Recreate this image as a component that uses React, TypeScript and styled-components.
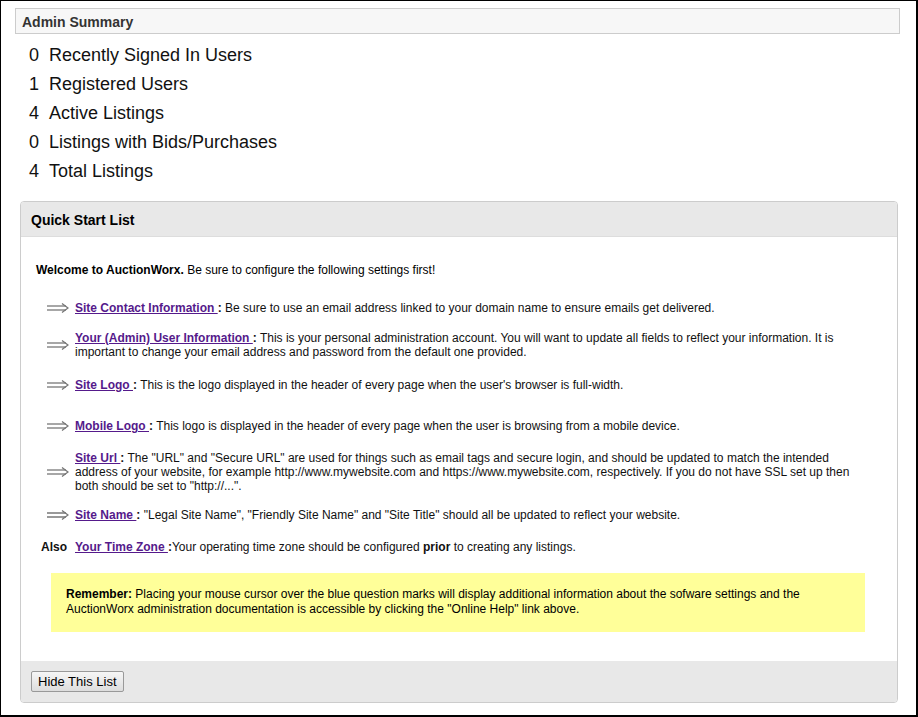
import React from "react";
import styled, { createGlobalStyle } from "styled-components";

const Global = createGlobalStyle`
  body { margin: 0; font-family: "Liberation Sans", Arial, sans-serif; color: #000; background: #fff; }
`;

const Frame = styled.div`
  width: 918px; height: 717px; box-sizing: border-box;
  border: 1px solid #000; border-right-width: 2px; border-bottom-width: 2px;
  padding: 7px 16px 0 14px;
`;
const SummaryBar = styled.div`
  height: 26px; box-sizing: border-box; border: 1px solid #ccc; background: #f7f7f7;
  font-size: 14px; font-weight: bold; color: #333; padding: 5px 0 0 6px;
`;
const Stats = styled.div`
  display: flex; flex-direction: column; padding: 9px 0 0 14px;
`;
const Stat = styled.div`
  display: flex; gap: 10px; font-size: 18px; height: 29px; line-height: 24px; color: #111;
`;
const Panel = styled.div`
  margin: 13px 0 0 5px; width: 876px; border: 1px solid #ccc; border-radius: 4px; overflow: hidden;
`;
const PanelHeader = styled.div`
  height: 35px; box-sizing: border-box; background: #e8e8e8; border-bottom: 1px solid #ddd;
  font-size: 14px; font-weight: bold; padding: 10px 0 0 10px;
`;
const PanelBody = styled.div`
  background: #fff; padding: 26px 30px 29px 15px; font-size: 12px; line-height: 14px;
`;
const Welcome = styled.p`
  margin: 0 0 13px 0; color: #000;
`;
const Row = styled.div<{ $h: number }>`
  display: grid; grid-template-columns: 39px 1fr; align-items: center; height: ${p => p.$h}px; color: #111;
`;
const ArrowCell = styled.div`
  display: flex; justify-content: center; padding-left: 4px;
`;
const AlsoCell = styled.div`
  font-weight: bold; font-size: 12px; padding-left: 5px;
`;
const Link = styled.a`
  color: #551a8b; font-weight: bold; text-decoration: underline;
`;
const Note = styled.div`
  margin: 12px 0 0 15px; width: 814px; box-sizing: border-box; background: #ffff99;
  padding: 14px 15px 15px; line-height: 15px;
`;
const Footer = styled.div`
  background: #e8e8e8; height: 41px; box-sizing: border-box; padding: 10px 0 0 10px;
`;
const Button = styled.button`
  font-family: "Liberation Sans", Arial, sans-serif; font-size: 13px; height: 21px; padding: 0 6px;
  border: 1px solid #999; border-radius: 2px; background: linear-gradient(#f6f6f6, #dddddd); color: #000;
`;

const Arrow = () => (
  <svg width="22" height="10" viewBox="0 0 22 10">
    <g stroke="#777" strokeWidth="1.3" fill="none">
      <line x1="0" y1="3" x2="19" y2="3" />
      <line x1="0" y1="7" x2="19" y2="7" />
      <polyline points="15,0.5 21,5 15,9.5" />
    </g>
  </svg>
);

const stats: [string, string][] = [
  ["0", "Recently Signed In Users"],
  ["1", "Registered Users"],
  ["4", "Active Listings"],
  ["0", "Listings with Bids/Purchases"],
  ["4", "Total Listings"],
];

const items: { h: number; link: string; text: React.ReactNode }[] = [
  { h: 36, link: "Site Contact Information ", text: "Be sure to use an email address linked to your domain name to ensure emails get delivered." },
  { h: 38, link: "Your (Admin) User Information ", text: "This is your personal administration account. You will want to update all fields to reflect your information. It is important to change your email address and password from the default one provided." },
  { h: 41, link: "Site Logo ", text: "This is the logo displayed in the header of every page when the user's browser is full-width." },
  { h: 42, link: "Mobile Logo ", text: "This logo is displayed in the header of every page when the user is browsing from a mobile device." },
  { h: 49, link: "Site Url ", text: "The \"URL\" and \"Secure URL\" are used for things such as email tags and secure login, and should be updated to match the intended address of your website, for example http://www.mywebsite.com and https://www.mywebsite.com, respectively. If you do not have SSL set up then both should be set to \"http://...\"." },
  { h: 37, link: "Site Name ", text: "\"Legal Site Name\", \"Friendly Site Name\" and \"Site Title\" should all be updated to reflect your website." },
];

export default function App() {
  return (
    <>
      <Global />
      <Frame>
        <SummaryBar>Admin Summary</SummaryBar>
        <Stats>
          {stats.map(([n, l]) => (
            <Stat key={l}><span>{n}</span><span>{l}</span></Stat>
          ))}
        </Stats>
        <Panel>
          <PanelHeader>Quick Start List</PanelHeader>
          <PanelBody>
            <Welcome><b>Welcome to AuctionWorx.</b> Be sure to configure the following settings first!</Welcome>
            {items.map(it => (
              <Row key={it.link} $h={it.h}>
                <ArrowCell><Arrow /></ArrowCell>
                <div><Link href="#">{it.link}</Link><b>:</b> {it.text}</div>
              </Row>
            ))}
            <Row $h={28}>
              <AlsoCell>Also</AlsoCell>
              <div><Link href="#">Your Time Zone </Link><b>:</b>Your operating time zone should be configured <b>prior</b> to creating any listings.</div>
            </Row>
            <Note><b>Remember:</b> Placing your mouse cursor over the blue question marks will display additional information about the sofware settings and the AuctionWorx administration documentation is accessible by clicking the "Online Help" link above.</Note>
          </PanelBody>
          <Footer><Button>Hide This List</Button></Footer>
        </Panel>
      </Frame>
    </>
  );
}
